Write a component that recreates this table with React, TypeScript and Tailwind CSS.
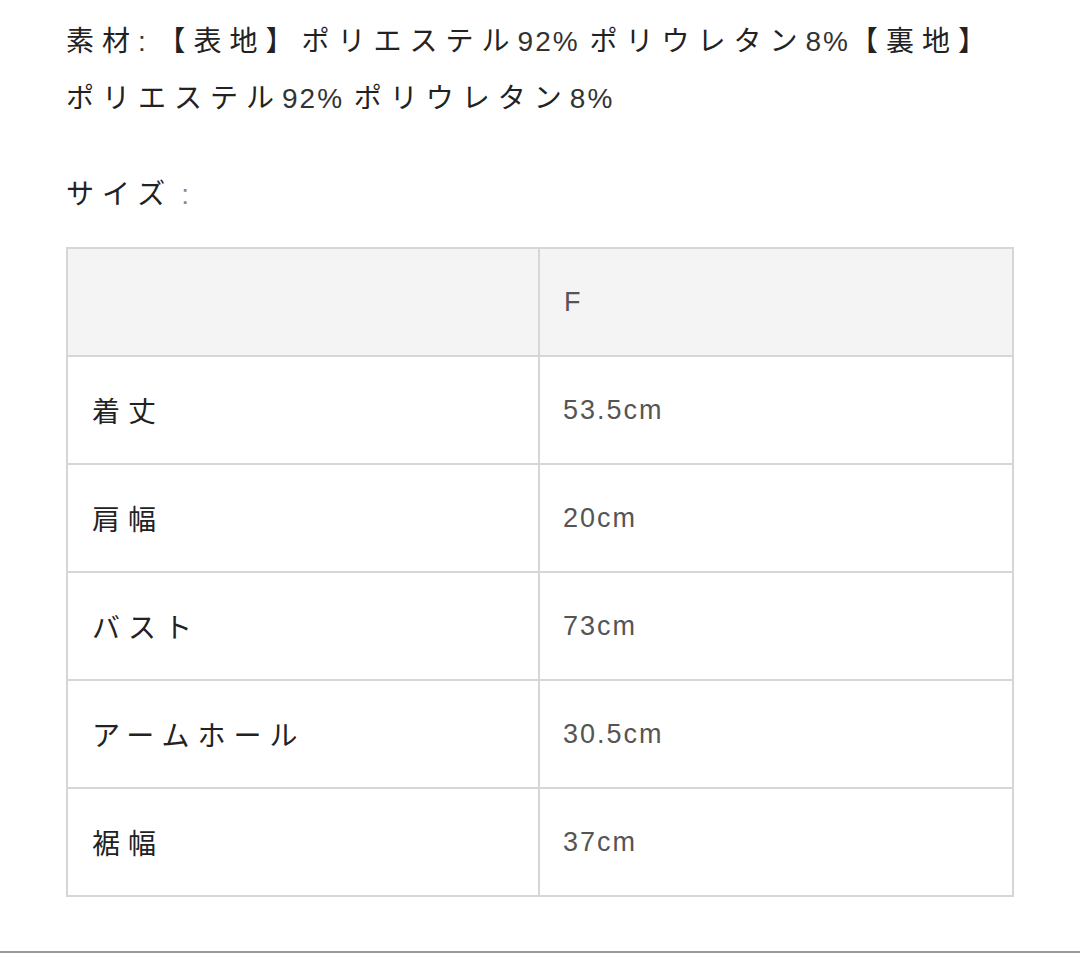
const rows = [
  { label: "着丈", value: "53.5cm" },
  { label: "肩幅", value: "20cm" },
  { label: "バスト", value: "73cm" },
  { label: "アームホール", value: "30.5cm" },
  { label: "裾幅", value: "37cm" },
]

const font = {
  fontFamily: '"Noto Sans CJK JP", sans-serif',
}

const latin = {
  fontFamily: '"Liberation Sans", "Noto Sans CJK JP", sans-serif',
}

// narrow latin run inside the japanese text
const Num = ({ children }: { children: React.ReactNode }) => (
  <span className="text-[28px] tracking-[2px] text-[#333]" style={latin}>
    {children}
  </span>
)

const SizeTable = () => {
  return (
    <div className="border-l-2 border-t-2 border-[#d6d6d6]">
      <div className="grid grid-cols-[472px_1fr] bg-[#f4f4f4]">
        <div className="h-[108px] border-b-2 border-r-2 border-[#d6d6d6]" />
        <div
          className="flex h-[108px] items-center border-b-2 border-r-2 border-[#d6d6d6] pl-[24px] text-[27px] tracking-[2px] text-[#555]"
          style={latin}
        >
          F
        </div>
      </div>
      {rows.map((row) => (
        <div key={row.label} className="grid grid-cols-[472px_1fr] bg-white">
          <div className="flex h-[108px] items-center border-b-2 border-r-2 border-[#d6d6d6] pl-[24px] text-[28px] tracking-[8px] text-[#222]">
            {row.label}
          </div>
          <div
            className="flex h-[108px] items-center border-b-2 border-r-2 border-[#d6d6d6] pl-[23px] text-[27px] tracking-[2px] text-[#555]"
            style={latin}
          >
            {row.value}
          </div>
        </div>
      ))}
    </div>
  )
}

export default function App() {
  return (
    <div className="relative h-[953px] w-[1080px] bg-white" style={font}>
      <div className="px-[66px] pt-[12px]">
        <p className="whitespace-nowrap text-[28px] leading-[54px] tracking-[8px] text-[#222]">
          素材<Num>: </Num>【表地】ポリエステル<Num>92% </Num>ポリウレタン<Num>8%</Num>【裏地】
          <br />
          ポリエステル<Num>92% </Num>ポリウレタン<Num>8%</Num>
        </p>
        <p className="mt-[39px] text-[28px] leading-[55px] tracking-[8px] text-[#222]">
          サイズ
          <span className="ml-[8px] text-[#888]" style={latin}>
            :
          </span>
        </p>
        <div className="mt-[25px]">
          <SizeTable />
        </div>
      </div>
      <div className="absolute bottom-0 left-0 h-[2px] w-full bg-[#999]" />
    </div>
  )
}
